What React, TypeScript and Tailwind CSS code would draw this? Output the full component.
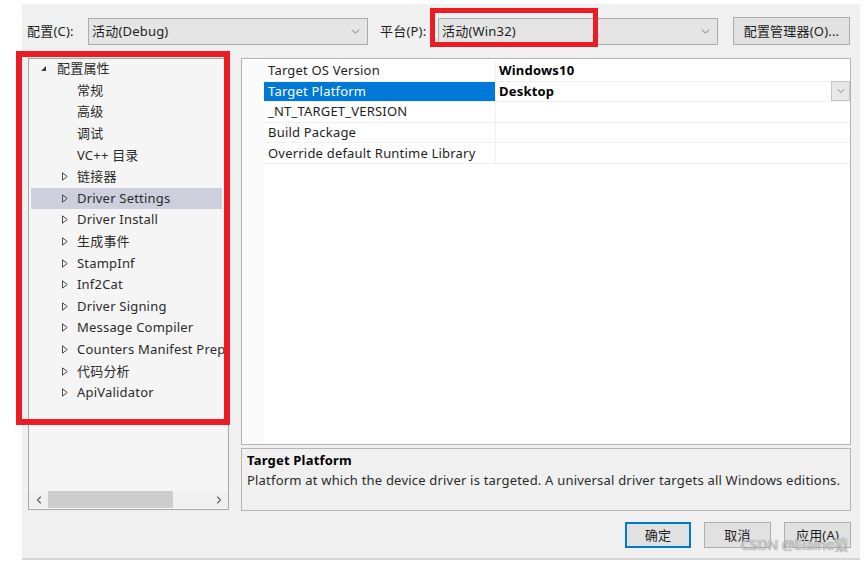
import { ChevronDown, ChevronLeft, ChevronRight } from "lucide-react";

type TreeItem = { label: string; depth: 0 | 1; kind: "open" | "closed" | "leaf" };

const treeItems: TreeItem[] = [
  { label: "配置属性", depth: 0, kind: "open" },
  { label: "常规", depth: 1, kind: "leaf" },
  { label: "高级", depth: 1, kind: "leaf" },
  { label: "调试", depth: 1, kind: "leaf" },
  { label: "VC++ 目录", depth: 1, kind: "leaf" },
  { label: "链接器", depth: 1, kind: "closed" },
  { label: "Driver Settings", depth: 1, kind: "closed" },
  { label: "Driver Install", depth: 1, kind: "closed" },
  { label: "生成事件", depth: 1, kind: "closed" },
  { label: "StampInf", depth: 1, kind: "closed" },
  { label: "Inf2Cat", depth: 1, kind: "closed" },
  { label: "Driver Signing", depth: 1, kind: "closed" },
  { label: "Message Compiler", depth: 1, kind: "closed" },
  { label: "Counters Manifest Preprocessor", depth: 1, kind: "closed" },
  { label: "代码分析", depth: 1, kind: "closed" },
  { label: "ApiValidator", depth: 1, kind: "closed" },
];

const props = [
  { name: "Target OS Version", value: "Windows10" },
  { name: "Target Platform", value: "Desktop", selected: true },
  { name: "_NT_TARGET_VERSION", value: "" },
  { name: "Build Package", value: "" },
  { name: "Override default Runtime Library", value: "" },
];

function Expander({ kind }: { kind: TreeItem["kind"] }) {
  if (kind === "open") {
    return (
      <svg width="7" height="7" viewBox="0 0 7 7" className="shrink-0">
        <path d="M6 1 L6 6 L1 6 Z" fill="#3c3c3c" />
      </svg>
    );
  }
  if (kind === "closed") {
    return (
      <svg width="6" height="9" viewBox="0 0 6 9" className="shrink-0">
        <path d="M0.5 0.8 L5.2 4.5 L0.5 8.2 Z" fill="none" stroke="#4a4a4a" strokeWidth="1" />
      </svg>
    );
  }
  return <span className="w-[6px] shrink-0" />;
}

function Combo({ text, width }: { text: string; width: string }) {
  return (
    <div
      className={`${width} flex h-[27px] items-center justify-between border border-[#acacac] bg-[#e5e5e5] pl-[3px] pr-[5px]`}
    >
      <span>{text}</span>
      <ChevronDown className="size-[13px] text-[#606060]" strokeWidth={1.5} />
    </div>
  );
}

function DialogButton({ label, focused }: { label: string; focused?: boolean }) {
  return (
    <div
      className={
        focused
          ? "flex h-[26px] w-[66px] items-center justify-center border-2 border-[#0078d7] bg-[#e1e1e1]"
          : "flex h-[26px] w-[67px] items-center justify-center border border-[#adadad] bg-[#e1e1e1]"
      }
    >
      {label}
    </div>
  );
}

export default function App() {
  return (
    <div className="relative h-[562px] w-[865px] overflow-hidden bg-white font-[Noto_Sans,Noto_Sans_CJK_SC,sans-serif] text-[13px] leading-none tracking-[0.2px] text-[#1e1e1e]">
      <div className="ml-[22px] mt-[4px] flex h-[556px] w-[838px] flex-col border-b-[2px] border-[#d6d6d6] bg-[#f0f0f0] pl-[5px] pr-[9px]">
        {/* configuration / platform bar */}
        <div className="mt-[13px] flex items-center">
          <span className="w-[61px]">配置(C):</span>
          <Combo text="活动(Debug)" width="w-[280px]" />
          <span className="ml-[12px] w-[58px]">平台(P):</span>
          <Combo text="活动(Win32)" width="w-[280px]" />
          <div className="ml-[15px] flex h-[28px] w-[117px] items-center justify-center border border-[#adadad] bg-[#e1e1e1]">
            配置管理器(O)...
          </div>
        </div>

        <div className="mt-[13px] flex">
          {/* tree */}
          <div className="ml-[1px] flex h-[452px] w-[201px] flex-col border border-[#a8a8a8] bg-[#f5f5f5]">
            <div className="-mt-[1px] flex-1 overflow-hidden pl-[2px] pr-[6px]">
              {treeItems.map((item) => (
                <div
                  key={item.label}
                  className={`flex h-[21.6px] items-center whitespace-nowrap ${
                    item.label === "Driver Settings" ? "bg-[#cdd0dc]" : ""
                  } ${item.depth === 0 ? "pl-[9px]" : "pl-[31px]"}`}
                >
                  <Expander kind={item.kind} />
                  <span className={`${item.depth === 0 ? "ml-[10px]" : "ml-[9px]"} text-[#2b2b2b]`}>
                    {item.label}
                  </span>
                </div>
              ))}
            </div>
            <div className="mb-[1px] flex h-[17px] items-center bg-[#f0f0f0]">
              <ChevronLeft className="ml-[4px] size-[12px] text-[#5a5a5a]" strokeWidth={2.2} />
              <div className="ml-[3px] h-[17px] w-[125px] bg-[#cdcdcd]" />
              <div className="flex-1" />
              <ChevronRight className="mr-[3px] size-[12px] text-[#5a5a5a]" strokeWidth={2.2} />
            </div>
          </div>

          <div className="ml-[12px] flex w-[610px] flex-col gap-[3px]">
            {/* property grid */}
            <div className="flex h-[387px] border border-[#b4b4b4] bg-white pt-[2px]">
              <div className="w-[22px] bg-[#fafafa]" />
              <div className="flex-1">
                {props.map((p) => (
                  <div key={p.name} className="flex h-[20.6px] border-b border-[#eef1f5]">
                    <div
                      className={`flex w-[231px] items-center pl-[4px] ${
                        p.selected ? "bg-[#0078d7] text-white" : ""
                      }`}
                    >
                      {p.name}
                    </div>
                    <div className="flex flex-1 items-center justify-between border-l border-[#eef1f5] pl-[3px]">
                      <span className="font-bold text-black">{p.value}</span>
                      {p.selected && (
                        <div className="flex h-[20px] w-[19px] items-center justify-center border border-[#c6c6c6] bg-[#e8e8e8]">
                          <ChevronDown className="size-[12px] text-[#606060]" strokeWidth={1.5} />
                        </div>
                      )}
                    </div>
                  </div>
                ))}
              </div>
            </div>

            {/* description */}
            <div className="flex h-[63px] flex-col border border-[#b4b4b4] bg-[#f0f0f0] pl-[5px] pt-[5px]">
              <span className="font-bold text-black">Target Platform</span>
              <span className="mt-[7px] text-[#2b2b2b]">
                Platform at which the device driver is targeted. A universal driver targets all Windows editions.
              </span>
            </div>
          </div>
        </div>

        {/* dialog buttons */}
        <div className="mt-[11px] flex justify-end gap-[13px]">
          <DialogButton label="确定" focused />
          <DialogButton label="取消" />
          <DialogButton label="应用(A)" />
        </div>
      </div>

      {/* annotation boxes drawn over the screenshot */}
      <div className="absolute left-[430px] top-[8px] h-[39px] w-[168px] border-[5px] border-[#ec1c24]" />
      <div className="absolute left-[16px] top-[51px] h-[374px] w-[214px] border-[6px] border-[#ec1c24]" />

      {/* watermark */}
      <div className="absolute left-[741px] top-[538px] text-[14px] tracking-normal text-[#d4d4d4] [text-shadow:0_0_1px_#555555]">
        CSDN @Elaine猿
      </div>
    </div>
  );
}
